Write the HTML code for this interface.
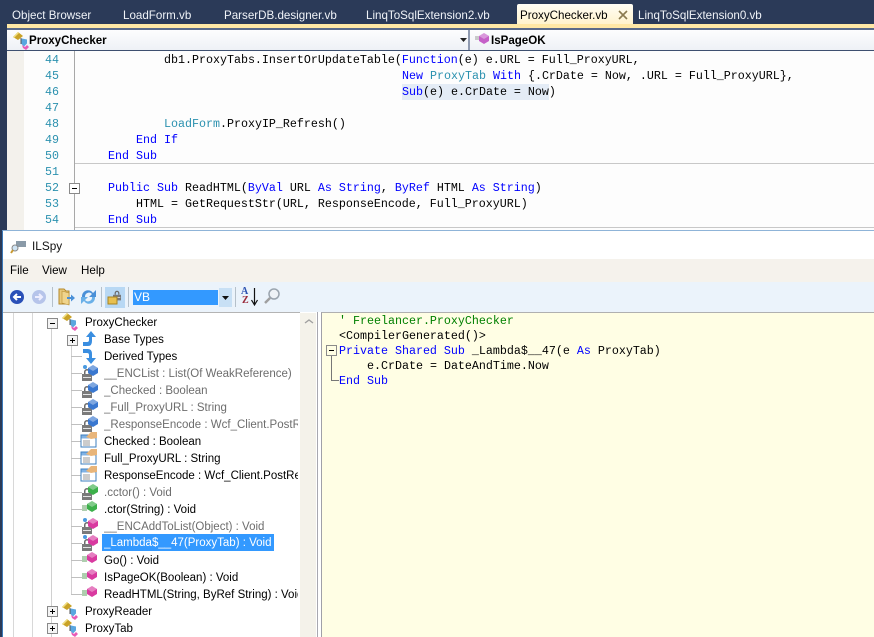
<!DOCTYPE html>
<html><head><meta charset="utf-8"><style>
html,body{margin:0;padding:0}
body{width:874px;height:637px;overflow:hidden;position:relative;background:#2b3a58;font-family:"Liberation Sans",sans-serif;font-size:11.6px;color:#000}
div,span.a,svg.a{position:absolute}
.t{white-space:pre;line-height:16px;font-size:11.5px;margin-top:1px}
.tab{top:8px;color:#f0f3f8;height:16px;line-height:16px;white-space:pre;font-size:11.6px}
.c{font-family:"Liberation Mono",monospace;font-size:11.67px;white-space:pre;line-height:16px;color:#000}
.n{left:24px;width:35px;text-align:right;color:#2b91af;font-family:"Liberation Mono",monospace;font-size:11.67px;line-height:16px}
b.k,i.k{color:#0000ff;font-weight:normal;font-style:normal}
i.y{color:#2b91af;font-style:normal}
.r{white-space:pre;line-height:17px;height:17px;left:104px;width:194px;overflow:hidden;font-size:11.5px;margin-top:1px}
.g{color:#6d6d6d}
.h{background:#bfbfbf}
.x{width:9px;height:9px;border:1px solid #8a8a8a;background:#f4f4f4}
.x:before{content:"";position:absolute;left:2px;top:4px;width:5px;height:1px;background:#000}
.p:after{content:"";position:absolute;left:4px;top:2px;width:1px;height:5px;background:#000}
svg{overflow:visible}
</style></head><body>
<svg width="0" height="0" style="position:absolute"><defs>
<g id="diam"><path d="M5 0L10 3V8L5 11L0 8V3Z" fill="currentColor"/><path d="M5 0L10 3L5 6L0 3Z" fill="#fff" opacity=".35"/></g>
<g id="lock"><path d="M2 4a3 3 0 0 1 6 0v2H6.500V4a1.500 1.500 0 0 0-3 0v2H2Z" fill="#6a6a6a"/><rect x="0" y="6" width="10" height="7" fill="#7a7a7a"/><rect x="1" y="9" width="8" height="1" fill="#e4e4e4"/></g>
<g id="cls"><path d="M0 5L5 0L10 4L5 8Z" fill="#c9a227"/><path d="M0 5L5 0L6 1L1 6Z" fill="#f0de80"/><path d="M8 7.500l1-1 5 1v4l-3 3-3-3Z" fill="#5aa7e0"/><path d="M9 13l3 2 2-2 2 2-3 3-3-2Z" fill="#e85cb8"/><path d="M8 6v6" stroke="#555" fill="none"/></g>
<g id="prop"><rect x="0" y="3" width="15" height="12" fill="#fff" stroke="#3d7fbf"/><rect x="0.500" y="3.500" width="14" height="3" fill="#7fb2e5"/><path d="M2 9h7M2 11h7M2 13h7" stroke="#999"/><path d="M5 5L10 0H16V6L10 7Z" fill="#e8b57a"/></g>
<g id="eq"><path d="M0 3h5M0 5h5M0 7h5" stroke="#5c9e5c"/></g>
</defs></svg>

<!-- tabs -->
<div class="tab" style="left:12px">Object Browser</div>
<div class="tab" style="left:123px">LoadForm.vb</div>
<div class="tab" style="left:224px">ParserDB.designer.vb</div>
<div class="tab" style="left:366px">LinqToSqlExtension2.vb</div>
<div style="left:517px;top:4px;width:116px;height:20px;background:linear-gradient(#fffdf5,#fff3cd);border-radius:2px 2px 0 0"></div>
<div class="tab" style="left:520px;color:#000">ProxyChecker.vb</div>
<svg class="a" style="left:618px;top:10px" width="10" height="10"><path d="M1 1L9 9M9 1L1 9" stroke="#8a7a50" stroke-width="1.600"/></svg>
<div class="tab" style="left:638px">LinqToSqlExtension0.vb</div>

<div style="left:7px;top:24px;width:867px;height:4px;background:#ffe8a6"></div>
<div style="left:7px;top:28px;width:867px;height:2px;background:#5a6a8a"></div>
<div style="left:7px;top:30px;width:867px;height:20px;background:linear-gradient(#fdfdfe,#eef1f6)"></div>
<div style="left:7px;top:50px;width:867px;height:1px;background:#3e5070"></div>
<div style="left:468px;top:30px;width:2px;height:20px;background:#8f9ab0"></div>
<svg class="a" style="left:13px;top:32px" width="22" height="16"><use href="#cls"/></svg>
<div style="left:29px;top:33px;font-weight:bold;line-height:16px;font-size:11.55px">ProxyChecker</div>
<svg class="a" style="left:460px;top:38px" width="7" height="4"><path d="M0 0H7L3.500 4Z" fill="#222"/></svg>
<svg class="a" style="left:475px;top:33px;color:#c560c8" width="14" height="12"><path d="M0 4h4M0 6h4" stroke="#999"/><g transform="translate(4 0)"><use href="#diam"/></g></svg>
<div style="left:491px;top:33px;font-weight:bold;line-height:16px;font-size:11.55px">IsPageOK</div>

<!-- editor -->
<div style="left:7px;top:51px;width:867px;height:179px;background:#fdfdfd"></div>
<div style="left:7px;top:51px;width:17px;height:179px;background:#f3f1ec"></div>
<div style="left:74px;top:51px;width:1px;height:179px;background:#a8a8a8"></div>
<div style="left:75px;top:163px;width:799px;height:1px;background:#c8c8c8"></div>
<div style="left:75px;top:227px;width:799px;height:1px;background:#c8c8c8"></div>
<div style="left:402px;top:84px;width:147px;height:16px;background:#e4ecf6"></div>
<div class="n" style="top:52px">44</div>
<div class="n" style="top:68px">45</div>
<div class="n" style="top:84px">46</div>
<div class="n" style="top:100px">47</div>
<div class="n" style="top:116px">48</div>
<div class="n" style="top:132px">49</div>
<div class="n" style="top:148px">50</div>
<div class="n" style="top:164px">51</div>
<div class="n" style="top:180px">52</div>
<div class="n" style="top:196px">53</div>
<div class="n" style="top:212px">54</div>
<div class="x" style="left:69px;top:183px;background:#fff"></div>
<div class="c" style="left:164px;top:52px">db1.ProxyTabs.InsertOrUpdateTable(<b class="k">Function</b>(e) e.URL = Full_ProxyURL,</div>
<div class="c" style="left:402px;top:68px"><b class="k">New</b> <i class="y">ProxyTab</i> <b class="k">With</b> {.CrDate = Now, .URL = Full_ProxyURL},</div>
<div class="c" style="left:402px;top:84px"><b class="k">Sub</b>(e) e.CrDate = Now)</div>
<div class="c" style="left:164px;top:116px"><i class="y">LoadForm</i>.ProxyIP_Refresh()</div>
<div class="c" style="left:136px;top:132px"><b class="k">End If</b></div>
<div class="c" style="left:108px;top:148px"><b class="k">End Sub</b></div>
<div class="c" style="left:108px;top:180px"><b class="k">Public Sub</b> ReadHTML(<b class="k">ByVal</b> URL <b class="k">As String</b>, <b class="k">ByRef</b> HTML <b class="k">As String</b>)</div>
<div class="c" style="left:136px;top:196px">HTML = GetRequestStr(URL, ResponseEncode, Full_ProxyURL)</div>
<div class="c" style="left:108px;top:212px"><b class="k">End Sub</b></div>

<!-- ILSpy window -->
<div style="left:2px;top:230px;width:872px;height:407px;background:#fff;border-left:1px solid #3a78b8;border-top:1px solid #8fb4d8;box-sizing:border-box"></div>
<svg class="a" style="left:11px;top:240px" width="16" height="14"><rect x="5" y="1" width="10" height="6" fill="#8a9aa8"/><circle cx="4" cy="8" r="3" fill="#cfe4f4" stroke="#888"/><path d="M2 10L0 13" stroke="#c99a30" stroke-width="2"/></svg>
<div style="left:32px;top:238px;line-height:16px;font-size:11.8px;color:#111">ILSpy</div>
<div style="left:3px;top:259px;width:871px;height:23px;background:#f5f2ec"></div>
<div style="left:10px;top:263px;line-height:16px">File</div>
<div style="left:42px;top:263px;line-height:16px">View</div>
<div style="left:81px;top:263px;line-height:16px">Help</div>
<div style="left:3px;top:282px;width:871px;height:30px;background:#ebf3fb"></div>
<div style="left:52px;top:287px;width:1px;height:20px;background:#b5c0ca"></div>
<div style="left:101px;top:287px;width:1px;height:20px;background:#b5c0ca"></div>
<div style="left:128px;top:287px;width:1px;height:20px;background:#b5c0ca"></div>
<div style="left:235px;top:287px;width:1px;height:20px;background:#b5c0ca"></div>
<svg class="a" style="left:10px;top:290px" width="14" height="14"><circle cx="7" cy="7" r="7" fill="#2a50b8"/><path d="M11 7H5M7 4L4 7L7 10" stroke="#fff" stroke-width="2" fill="none"/></svg>
<svg class="a" style="left:32px;top:290px" width="14" height="14"><circle cx="7" cy="7" r="7" fill="#b6c4ea"/><path d="M3 7H9M7 4L10 7L7 10" stroke="#eef" stroke-width="2" fill="none"/></svg>
<svg class="a" style="left:59px;top:288px" width="16" height="18"><path d="M0 1H5L7 3H10V16H0Z" fill="#e8c97c" stroke="#b68a2c"/><path d="M3 3L10 5V17L3 15Z" fill="#f0d48c" stroke="#b68a2c" stroke-width=".6"/><path d="M8 9H12V6.500L16 10L12 13.500V11H8Z" fill="#4a90d8"/></svg>
<svg class="a" style="left:81px;top:289px" width="15" height="16"><path d="M1 8A6 6 0 0 1 12 4L15 1V8H8L11 5A4 4 0 0 0 4 8Z" fill="#4a90d8"/><path d="M14 8A6 6 0 0 1 3 12L0 15V8H7L4 11A4 4 0 0 0 11 8Z" fill="#6ab0e8"/></svg>
<div style="left:105px;top:287px;width:20px;height:21px;background:#b8d8f4"></div>
<svg class="a" style="left:108px;top:290px" width="14" height="15"><use href="#lock" transform="translate(5 0) scale(.8)"/><rect x="0" y="7" width="9" height="7" fill="#e8c050" stroke="#a88420"/></svg>
<div style="left:133px;top:290px;width:85px;height:15px;background:#3399ff;color:#fff;line-height:15px;padding-left:1px;box-sizing:border-box;font-size:12px">VB</div>
<div style="left:219px;top:288px;width:13px;height:19px;background:#c8e0f5"></div>
<svg class="a" style="left:222px;top:296px" width="7" height="4"><path d="M0 0H7L3.500 4Z" fill="#111"/></svg>
<div style="left:241px;top:287px;font:bold 10px/10px 'Liberation Serif',serif;color:#2a50b0">A</div>
<div style="left:242px;top:296px;font:bold 10px/10px 'Liberation Serif',serif;color:#9a2a3a">Z</div>
<svg class="a" style="left:251px;top:288px" width="7" height="18"><path d="M3.500 0V16M0.500 12L3.500 17L6.500 12" stroke="#111" stroke-width="1.200" fill="none"/></svg>
<svg class="a" style="left:264px;top:288px" width="16" height="17"><circle cx="10" cy="6" r="5" fill="#eef2f6" stroke="#9aa4ae" stroke-width="1.500"/><path d="M6 10L1 15" stroke="#a0a0a0" stroke-width="2.500"/></svg>

<!-- tree pane -->
<div style="left:3px;top:312px;width:297px;height:325px;background:#fff;border-top:1px solid #b4b4b4;box-sizing:border-box"></div>
<div style="left:300px;top:313px;width:16px;height:324px;background:#f4f2ea"></div>
<svg class="a" style="left:305px;top:319px" width="8" height="5"><path d="M0 4L4 1L8 4" stroke="#a0a0a0" stroke-width="1.400" fill="none"/></svg>
<div style="left:316px;top:312px;width:5px;height:325px;background:#fff"></div>
<div style="left:317px;top:312px;width:1px;height:325px;background:#a8a8b0"></div>
<div style="left:13px;top:313px;width:1px;height:324px;background:#d8d8d8"></div>
<div style="left:32px;top:313px;width:1px;height:324px;background:#d8d8d8"></div>
<div style="left:51px;top:326px;width:1px;height:311px;background:#d0d0d0"></div>
<div style="left:71px;top:344px;width:1px;height:251px;background:#d0d0d0"></div>
<div class="h" style="left:71px;top:356px;width:11px;height:1px"></div>
<div class="h" style="left:71px;top:373px;width:11px;height:1px"></div>
<div class="h" style="left:71px;top:390px;width:11px;height:1px"></div>
<div class="h" style="left:71px;top:407px;width:11px;height:1px"></div>
<div class="h" style="left:71px;top:424px;width:11px;height:1px"></div>
<div class="h" style="left:71px;top:441px;width:11px;height:1px"></div>
<div class="h" style="left:71px;top:458px;width:11px;height:1px"></div>
<div class="h" style="left:71px;top:475px;width:11px;height:1px"></div>
<div class="h" style="left:71px;top:492px;width:11px;height:1px"></div>
<div class="h" style="left:71px;top:509px;width:11px;height:1px"></div>
<div class="h" style="left:71px;top:526px;width:11px;height:1px"></div>
<div class="h" style="left:71px;top:543px;width:11px;height:1px"></div>
<div class="h" style="left:71px;top:560px;width:11px;height:1px"></div>
<div class="h" style="left:71px;top:577px;width:11px;height:1px"></div>
<div class="h" style="left:71px;top:594px;width:11px;height:1px"></div>
<div class="x" style="left:47px;top:318px"></div>
<div class="x p" style="left:67px;top:335px"></div>
<div class="x p" style="left:47px;top:606px"></div>
<div class="x p" style="left:47px;top:623px"></div>
<svg class="a" style="left:62px;top:313px" width="17" height="18"><use href="#cls"/></svg>
<svg class="a" style="left:62px;top:602px" width="17" height="18"><use href="#cls"/></svg>
<svg class="a" style="left:62px;top:619px" width="17" height="18"><use href="#cls"/></svg>
<div class="t" style="left:85px;top:314px">ProxyChecker</div>
<div class="t" style="left:85px;top:603px">ProxyReader</div>
<div class="t" style="left:85px;top:620px">ProxyTab</div>

<svg class="a" style="left:82px;top:331px" width="15" height="16"><path d="M1 15H6Q10 15 10 10V6H14L9 0L4 6H7V9Q7 11 5 11H1Z" fill="#3a8ee0"/></svg>
<svg class="a" style="left:82px;top:348px" width="15" height="16"><path d="M1 1H6Q10 1 10 6V10H14L9 16L4 10H7V7Q7 5 5 5H1Z" fill="#3a8ee0"/></svg>

<svg class="a" style="left:82px;top:365px;color:#3a78d0" width="16" height="16"><use href="#lock" y="3"/><g transform="translate(6 0)"><use href="#diam"/></g><circle cx="3" cy="2" r="2" fill="#4a9ae0"/></svg>
<svg class="a" style="left:82px;top:382px;color:#3a78d0" width="16" height="16"><use href="#lock" y="3"/><g transform="translate(6 0)"><use href="#diam"/></g></svg>
<svg class="a" style="left:82px;top:399px;color:#3a78d0" width="16" height="16"><use href="#lock" y="3"/><g transform="translate(6 0)"><use href="#diam"/></g></svg>
<svg class="a" style="left:82px;top:416px;color:#3a78d0" width="16" height="16"><use href="#lock" y="3"/><g transform="translate(6 0)"><use href="#diam"/></g></svg>
<svg class="a" style="left:81px;top:432px" width="17" height="17"><use href="#prop"/></svg>
<svg class="a" style="left:81px;top:449px" width="17" height="17"><use href="#prop"/></svg>
<svg class="a" style="left:81px;top:466px" width="17" height="17"><use href="#prop"/></svg>
<svg class="a" style="left:82px;top:484px;color:#3cb04a" width="16" height="16"><use href="#lock" y="3"/><g transform="translate(6 0)"><use href="#diam"/></g></svg>
<svg class="a" style="left:82px;top:501px;color:#3cb04a" width="16" height="16"><use href="#eq" y="2"/><g transform="translate(5 0)"><use href="#diam"/></g></svg>
<svg class="a" style="left:82px;top:518px;color:#d93aa0" width="16" height="16"><use href="#lock" y="3"/><g transform="translate(6 0)"><use href="#diam"/></g><circle cx="3" cy="2" r="2" fill="#4a9ae0"/></svg>
<svg class="a" style="left:82px;top:535px;color:#d93aa0" width="16" height="16"><use href="#lock" y="3"/><g transform="translate(6 0)"><use href="#diam"/></g><circle cx="3" cy="2" r="2" fill="#4a9ae0"/></svg>
<svg class="a" style="left:82px;top:552px;color:#d93aa0" width="16" height="16"><use href="#eq" y="2"/><g transform="translate(5 0)"><use href="#diam"/></g></svg>
<svg class="a" style="left:82px;top:569px;color:#d93aa0" width="16" height="16"><use href="#eq" y="2"/><g transform="translate(5 0)"><use href="#diam"/></g></svg>
<svg class="a" style="left:82px;top:586px;color:#d93aa0" width="16" height="16"><use href="#eq" y="2"/><g transform="translate(5 0)"><use href="#diam"/></g></svg>

<div class="r" style="top:331px">Base Types</div>
<div class="r" style="top:348px">Derived Types</div>
<div class="r g" style="top:365px">__ENCList : List(Of WeakReference)</div>
<div class="r g" style="top:382px">_Checked : Boolean</div>
<div class="r g" style="top:399px">_Full_ProxyURL : String</div>
<div class="r g" style="top:416px">_ResponseEncode : Wcf_Client.PostResponse</div>
<div class="r" style="top:433px">Checked : Boolean</div>
<div class="r" style="top:450px">Full_ProxyURL : String</div>
<div class="r" style="top:467px">ResponseEncode : Wcf_Client.PostResponse</div>
<div class="r g" style="top:484px">.cctor() : Void</div>
<div class="r" style="top:501px">.ctor(String) : Void</div>
<div class="r g" style="top:518px">__ENCAddToList(Object) : Void</div>
<div style="left:102px;top:534px;width:172px;height:17px;background:#3399ff"></div>
<div class="r" style="top:534px;color:#fff;width:170px">_Lambda$__47(ProxyTab) : Void</div>
<div class="r" style="top:552px">Go() : Void</div>
<div class="r" style="top:569px">IsPageOK(Boolean) : Void</div>
<div class="r" style="top:586px">ReadHTML(String, ByRef String) : Void</div>

<!-- code pane -->
<div style="left:321px;top:312px;width:553px;height:325px;background:#fffee4;border-left:1px solid #a0a0a8;border-top:1px solid #b0b0b0;box-sizing:border-box"></div>
<div class="c" style="left:339px;top:313px;color:#008000">' Freelancer.ProxyChecker</div>
<div class="c" style="left:339px;top:328px">&lt;CompilerGenerated()&gt;</div>
<div class="c" style="left:339px;top:343px"><b class="k">Private Shared Sub</b> _Lambda$__47(e <b class="k">As</b> ProxyTab)</div>
<div class="c" style="left:367px;top:358px">e.CrDate = DateAndTime.Now</div>
<div class="c" style="left:339px;top:373px"><b class="k">End Sub</b></div>
<div class="x" style="left:326px;top:345px;background:#fffee4"></div>
<div style="left:331px;top:356px;width:1px;height:24px;background:#777"></div>
<div style="left:331px;top:380px;width:8px;height:1px;background:#777"></div>
</body></html>
